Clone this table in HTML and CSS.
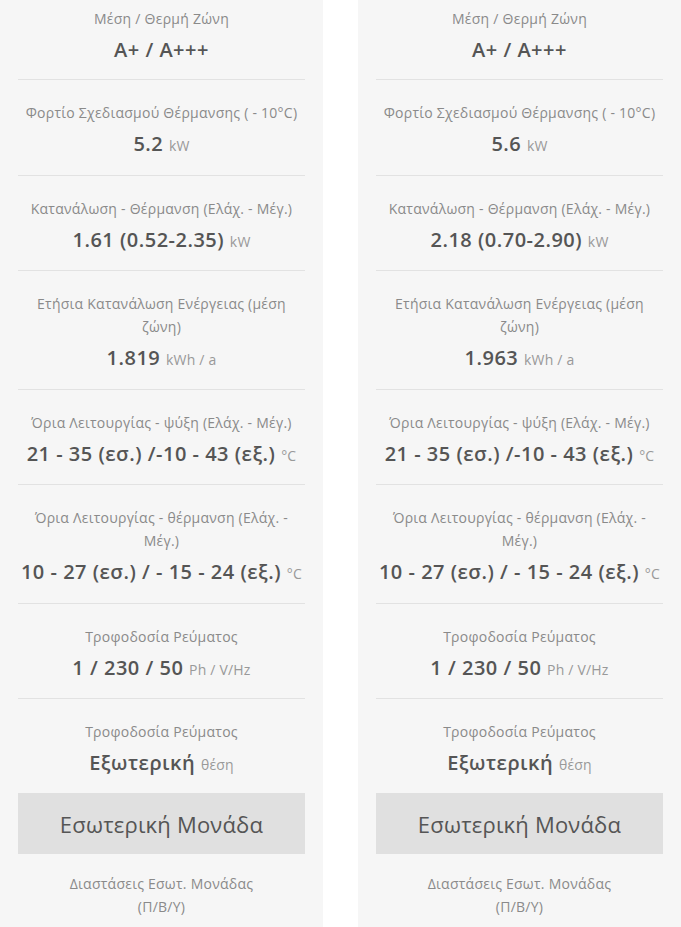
FILE: index.html
```html
<!DOCTYPE html>
<html lang="el">
<head>
<meta charset="utf-8">
<title>Specs</title>
<link rel="stylesheet" href="styles.css">
</head>
<body>
<div class="compare">
  <div class="col">
    <div class="item first"><div class="label">Μέση / Θερμή Ζώνη</div><div class="value">A+ / A+++</div></div>
    <div class="item"><div class="label">Φορτίο Σχεδιασμού Θέρμανσης ( - 10°C)</div><div class="value">5.2 <span class="unit">kW</span></div></div>
    <div class="item"><div class="label">Κατανάλωση - Θέρμανση (Ελάχ. - Μέγ.)</div><div class="value">1.61 (0.52-2.35) <span class="unit">kW</span></div></div>
    <div class="item"><div class="label">Ετήσια Κατανάλωση Ενέργειας (μέση ζώνη)</div><div class="value">1.819 <span class="unit">kWh / a</span></div></div>
    <div class="item"><div class="label">Όρια Λειτουργίας - ψύξη (Ελάχ. - Μέγ.)</div><div class="value">21 - 35 (εσ.) /-10 - 43 (εξ.) <span class="unit">°C</span></div></div>
    <div class="item"><div class="label">Όρια Λειτουργίας - θέρμανση (Ελάχ. - Μέγ.)</div><div class="value">10 - 27 (εσ.) / - 15 - 24 (εξ.) <span class="unit">°C</span></div></div>
    <div class="item"><div class="label">Τροφοδοσία Ρεύματος</div><div class="value">1 / 230 / 50 <span class="unit">Ph / V/Hz</span></div></div>
    <div class="item last"><div class="label">Τροφοδοσία Ρεύματος</div><div class="value">Εξωτερική <span class="unit">θέση</span></div></div>
    <div class="section">Εσωτερική Μονάδα</div>
    <div class="item sub"><div class="label narrow">Διαστάσεις Εσωτ. Μονάδας (Π/Β/Υ)</div></div>
  </div>
  <div class="col">
    <div class="item first"><div class="label">Μέση / Θερμή Ζώνη</div><div class="value">A+ / A+++</div></div>
    <div class="item"><div class="label">Φορτίο Σχεδιασμού Θέρμανσης ( - 10°C)</div><div class="value">5.6 <span class="unit">kW</span></div></div>
    <div class="item"><div class="label">Κατανάλωση - Θέρμανση (Ελάχ. - Μέγ.)</div><div class="value">2.18 (0.70-2.90) <span class="unit">kW</span></div></div>
    <div class="item"><div class="label">Ετήσια Κατανάλωση Ενέργειας (μέση ζώνη)</div><div class="value">1.963 <span class="unit">kWh / a</span></div></div>
    <div class="item"><div class="label">Όρια Λειτουργίας - ψύξη (Ελάχ. - Μέγ.)</div><div class="value">21 - 35 (εσ.) /-10 - 43 (εξ.) <span class="unit">°C</span></div></div>
    <div class="item"><div class="label">Όρια Λειτουργίας - θέρμανση (Ελάχ. - Μέγ.)</div><div class="value">10 - 27 (εσ.) / - 15 - 24 (εξ.) <span class="unit">°C</span></div></div>
    <div class="item"><div class="label">Τροφοδοσία Ρεύματος</div><div class="value">1 / 230 / 50 <span class="unit">Ph / V/Hz</span></div></div>
    <div class="item last"><div class="label">Τροφοδοσία Ρεύματος</div><div class="value">Εξωτερική <span class="unit">θέση</span></div></div>
    <div class="section">Εσωτερική Μονάδα</div>
    <div class="item sub"><div class="label narrow">Διαστάσεις Εσωτ. Μονάδας (Π/Β/Υ)</div></div>
  </div>
</div>
</body>
</html>
```
FILE: styles.css
```css
html, body {
  margin: 0;
  padding: 0;
  background: #fff;
  font-family: "Open Sans", "Noto Sans", sans-serif;
}
.compare {
  display: flex;
  gap: 35px;
  width: 681px;
  height: 927px;
  overflow: hidden;
}
.col {
  width: 323px;
  flex: none;
  background: #f6f6f6;
  padding: 0 18px;
  box-sizing: border-box;
}
.item {
  padding: 21px 0 16.5px;
  border-bottom: 1px solid #e2e2e2;
  text-align: center;
}
.item.first {
  padding-top: 7px;
  padding-bottom: 15px;
}
.item.last {
  border-bottom: none;
  padding-bottom: 16px;
}
.item.sub {
  border-bottom: none;
  padding-top: 18px;
}
.label {
  font-size: 14px;
  line-height: 23px;
  letter-spacing: 0.25px;
  color: #8a8a8a;
}
.label.narrow {
  padding: 0 40px;
}
.value {
  margin: 6px -6px 0;
  font-size: 20px;
  line-height: 28px;
  letter-spacing: 0.5px;
  font-weight: 600;
  color: #555;
  white-space: nowrap;
}
.unit {
  font-size: 14px;
  line-height: 1;
  font-weight: 400;
  letter-spacing: 0.2px;
  color: #999;
}
.section {
  background: #e0e0e0;
  height: 61px;
  display: flex;
  align-items: center;
  justify-content: center;
  font-size: 22px;
  letter-spacing: 0.2px;
  color: #555;
}
```
